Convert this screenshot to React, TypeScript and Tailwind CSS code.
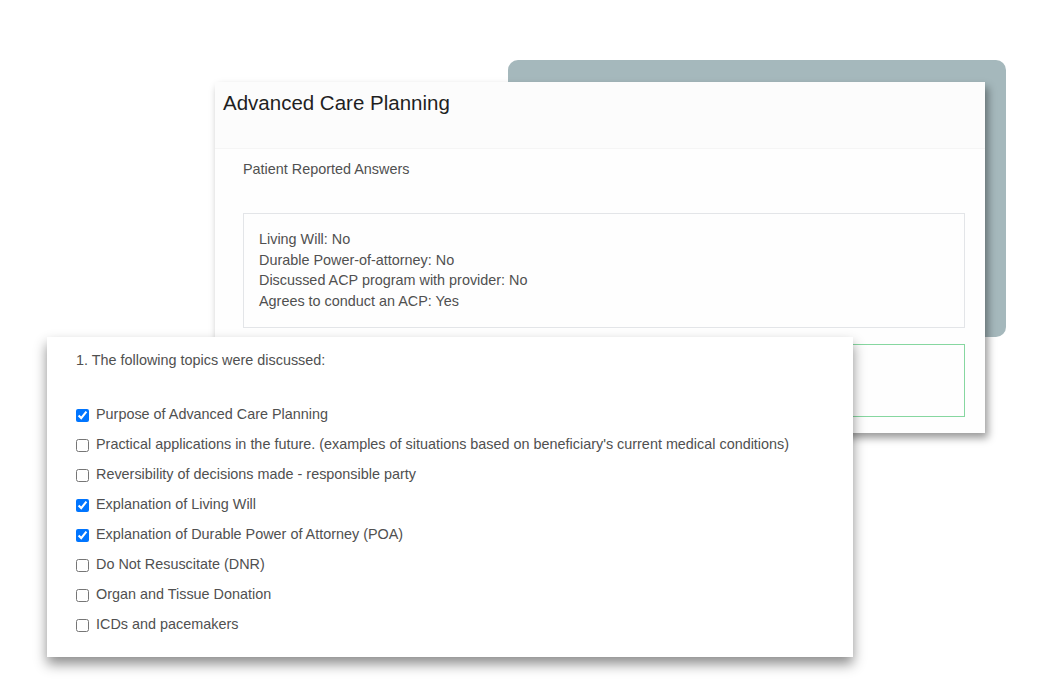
const answers = [
  'Living Will: No',
  'Durable Power-of-attorney: No',
  'Discussed ACP program with provider: No',
  'Agrees to conduct an ACP: Yes',
];

const topics = [
  { label: 'Purpose of Advanced Care Planning', checked: true },
  { label: "Practical applications in the future. (examples of situations based on beneficiary's current medical conditions)", checked: false },
  { label: 'Reversibility of decisions made - responsible party', checked: false },
  { label: 'Explanation of Living Will', checked: true },
  { label: 'Explanation of Durable Power of Attorney (POA)', checked: true },
  { label: 'Do Not Resuscitate (DNR)', checked: false },
  { label: 'Organ and Tissue Donation', checked: false },
  { label: 'ICDs and pacemakers', checked: false },
];

export default function App() {
  return (
    <div className="relative w-[1050px] h-[698px] bg-white overflow-hidden font-['Liberation_Sans',Arial,sans-serif]">
      {/* backdrop panel */}
      <div className="absolute left-[508px] top-[60px] w-[498px] h-[277px] rounded-[10px] bg-[#a5b8bc]" />

      {/* back card */}
      <div className="absolute left-[215px] top-[82px] w-[770px] h-[351px] flex flex-col bg-[#fefefe] shadow-[3px_5px_8px_rgba(0,0,0,0.4)]">
        <div className="h-[66px] bg-[#fcfcfc] pl-[8px] pt-[8px]">
          <h1 className="text-[20.5px] leading-[26px] text-[#1f1f1f]">Advanced Care Planning</h1>
        </div>
        <div className="flex-1 flex flex-col border-t border-[#f5f5f5] pl-[28px] pr-[20px] pt-[10px] pb-[16px]">
          <div className="text-[14.4px] leading-[20px] text-[#505050]">Patient Reported Answers</div>
          <div className="mt-[34px] h-[115px] border border-[#e3e5e8] pl-[15px] pt-[15px]">
            {answers.map((a) => (
              <div key={a} className="text-[14.4px] leading-[20.5px] text-[#505050]">{a}</div>
            ))}
          </div>
          <div className="mt-[16px] flex-1 border border-[#86d7a0]" />
        </div>
      </div>

      {/* front card */}
      <div className="absolute left-[47px] top-[337px] w-[806px] h-[320px] bg-white shadow-[0_7px_12px_rgba(0,0,0,0.45)] pl-[29px] pt-[13px]">
        <div className="text-[14.4px] leading-[20px] text-[#505050]">1. The following topics were discussed:</div>
        <div className="mt-[30px] flex flex-col">
          {topics.map((t) => (
            <label key={t.label} className="h-[30px] flex items-center gap-[7px] text-[14.4px] text-[#505050]">
              <input type="checkbox" defaultChecked={t.checked} className="m-0 w-[13px] h-[13px] accent-[#0075ff]" />
              <span>{t.label}</span>
            </label>
          ))}
        </div>
      </div>
    </div>
  );
}
